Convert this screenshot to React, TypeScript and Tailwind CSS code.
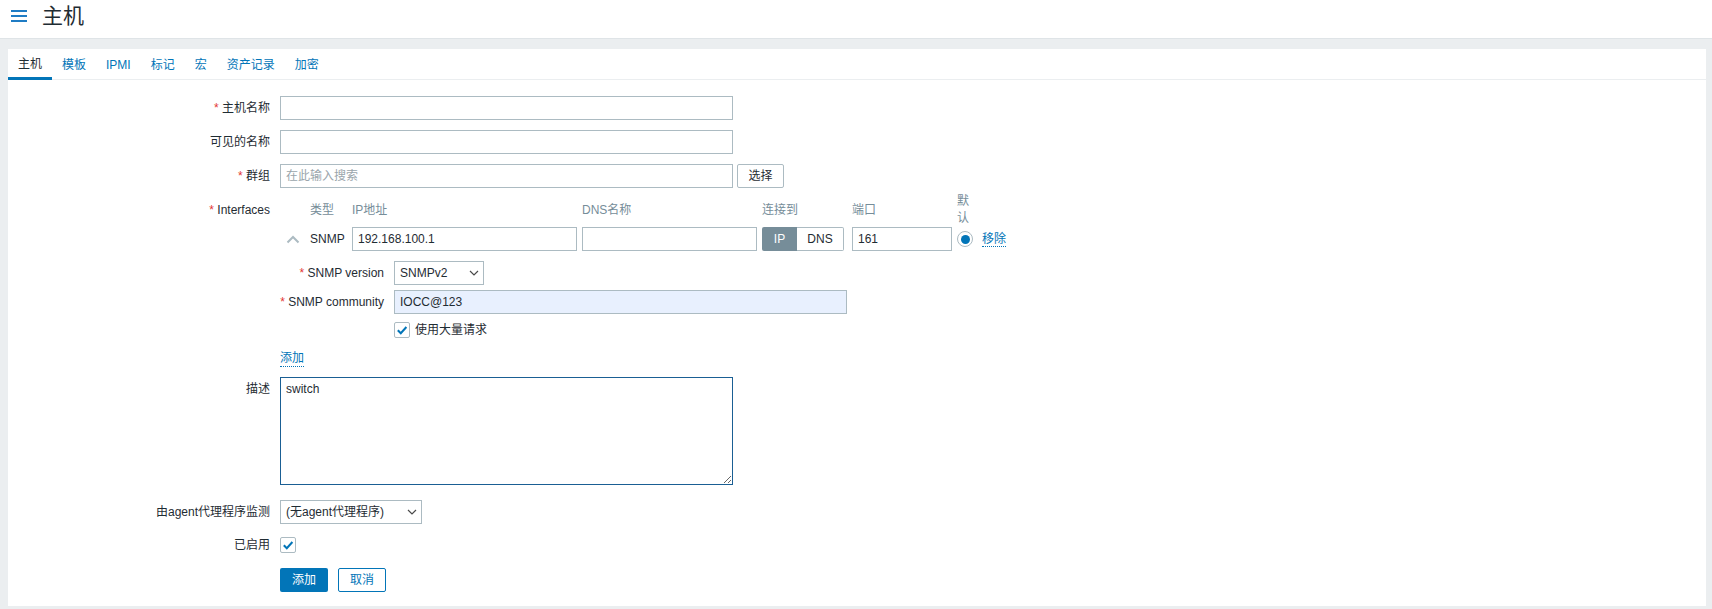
import React from "react";

const Req = () => <span className="text-[#e33734]">* </span>;

const Label = ({
  children,
  req = false,
  className = "",
}: {
  children: React.ReactNode;
  req?: boolean;
  className?: string;
}) => (
  <div className={`w-[262px] shrink-0 text-right text-[#1f2c33] ${className}`}>
    <span>
      {req && <Req />}
      {children}
    </span>
  </div>
);

const TextInput = ({
  value = "",
  placeholder,
  className = "",
}: {
  value?: string;
  placeholder?: string;
  className?: string;
}) => (
  <input
    readOnly
    defaultValue={value}
    placeholder={placeholder}
    className={`h-[24px] border border-[#acbbc2] px-[5px] text-[12px] text-[#1f2c33] outline-none placeholder:text-[#9aa5ab] ${className}`}
  />
);

const Select = ({ value, className = "" }: { value: string; className?: string }) => (
  <div
    className={`flex h-[24px] items-center justify-between border border-[#acbbc2] bg-white pl-[5px] pr-[4px] text-[#1f2c33] ${className}`}
  >
    <span>{value}</span>
    <svg width="10" height="6" viewBox="0 0 10 6">
      <path d="M1 1 L5 5 L9 1" fill="none" stroke="#4a4a4a" strokeWidth="1.2" />
    </svg>
  </div>
);

const Check = () => (
  <span className="flex h-[16px] w-[16px] items-center justify-center rounded-[2px] border border-[#acbbc2] bg-white">
    <svg width="12" height="12" viewBox="0 0 12 12">
      <path d="M1.8 6.2 L4.8 9.2 L10.4 3" fill="none" stroke="#0275b8" strokeWidth="2" />
    </svg>
  </span>
);

const DotLink = ({ children }: { children: React.ReactNode }) => (
  <span className="border-b border-dotted border-[#0275b8] leading-[15px] text-[#0275b8]">
    {children}
  </span>
);

const tabs = ["主机", "模板", "IPMI", "标记", "宏", "资产记录", "加密"];

export default function App() {
  return (
    <div className="min-h-screen bg-[#ebeef0] font-['Liberation_Sans','Noto_Sans_CJK_SC',sans-serif] text-[12px] text-[#1f2c33]">
      {/* top header */}
      <header className="h-[39px] border-b border-[#dfe4e7] bg-white pt-[5px]">
        <div className="flex h-[21px] items-center">
          <svg width="16" height="12" viewBox="0 0 16 12" className="ml-[11px]">
            <rect x="0" y="0" width="16" height="2" fill="#1f7cc4" />
            <rect x="0" y="5" width="16" height="2" fill="#1f7cc4" />
            <rect x="0" y="10" width="16" height="2" fill="#1f7cc4" />
          </svg>
          <h1 className="ml-[15px] text-[21px] leading-[21px] text-[#1f2c33]">主机</h1>
        </div>
      </header>

      <div className="ml-[8px] mr-[6px] pt-[10px]">
        <div className="bg-white pb-[14px]">
          {/* tabs */}
          <div className="flex h-[31px] border-b border-[#ebeef0]">
            {tabs.map((t, i) => (
              <div
                key={t}
                className={
                  i === 0
                    ? "-mb-px flex h-[31px] items-center border-b-[3px] border-[#0275b8] px-[10px] pt-[1px] text-[#1f2c33]"
                    : "flex h-[30px] items-center px-[10px] pt-[1px] text-[#0275b8]"
                }
              >
                {t}
              </div>
            ))}
          </div>

          {/* form */}
          <div className="flex flex-col pt-[16px]">
            <div className="flex items-center gap-[10px]">
              <Label req>主机名称</Label>
              <TextInput className="w-[453px]" />
            </div>

            <div className="mt-[10px] flex items-center gap-[10px]">
              <Label>可见的名称</Label>
              <TextInput className="w-[453px]" />
            </div>

            <div className="mt-[10px] flex items-center gap-[10px]">
              <Label req>群组</Label>
              <div className="flex gap-[4px]">
                <TextInput className="w-[453px]" placeholder="在此输入搜索" />
                <div className="flex h-[24px] w-[47px] items-center justify-center rounded-[2px] border border-[#acbbc2] bg-white text-[#1f2c33]">
                  选择
                </div>
              </div>
            </div>

            {/* interfaces */}
            <div className="mt-[5px] flex items-start gap-[10px]">
              <Label req className="flex h-[34px] items-center justify-end">
                Interfaces
              </Label>
              <div className="flex flex-col">
                <div className="grid grid-cols-[25px_37px_225px_175px_85px_100px_20px_auto] items-center gap-x-[5px]">
                  <div />
                  <div className="leading-[17px] text-[#768d99]">类型</div>
                  <div className="leading-[17px] text-[#768d99]">IP地址</div>
                  <div className="leading-[17px] text-[#768d99]">DNS名称</div>
                  <div className="leading-[17px] text-[#768d99]">连接到</div>
                  <div className="leading-[17px] text-[#768d99]">端口</div>
                  <div className="w-[16px] leading-[17px] text-[#768d99]">默认</div>
                  <div />

                  <div className="flex h-[24px] items-center justify-center">
                    <svg width="14" height="9" viewBox="0 0 14 9">
                      <path d="M1.5 7.5 L7 2 L12.5 7.5" fill="none" stroke="#acbbc2" strokeWidth="2" />
                    </svg>
                  </div>
                  <div className="text-[#1f2c33]">SNMP</div>
                  <TextInput className="w-[225px]" value="192.168.100.1" />
                  <TextInput className="w-[175px]" />
                  <div className="flex h-[24px] w-[82px]">
                    <div className="flex w-[35px] items-center justify-center rounded-l-[2px] bg-[#768d99] text-white">
                      IP
                    </div>
                    <div className="flex w-[47px] items-center justify-center rounded-r-[2px] border border-l-0 border-[#acbbc2] text-[#1f2c33]">
                      DNS
                    </div>
                  </div>
                  <TextInput className="w-[100px]" value="161" />
                  <span className="flex h-[16px] w-[16px] items-center justify-center rounded-full border border-[#acbbc2] bg-white">
                    <span className="h-[9px] w-[9px] rounded-full bg-[#0275b8]" />
                  </span>
                  <div>
                    <DotLink>移除</DotLink>
                  </div>
                </div>

                <div className="mt-[10px] flex items-center gap-[10px]">
                  <div className="w-[104px] text-right">
                    <Req />
                    SNMP version
                  </div>
                  <Select value="SNMPv2" className="w-[90px]" />
                </div>
                <div className="mt-[5px] flex items-center gap-[10px]">
                  <div className="w-[104px] text-right">
                    <Req />
                    SNMP community
                  </div>
                  <TextInput className="w-[453px] bg-[#e8f0fe]" value="IOCC@123" />
                </div>
                <div className="mt-[4px] flex h-[24px] items-center pl-[114px]">
                  <Check />
                  <span className="ml-[5px]">使用大量请求</span>
                </div>

                <div className="mt-[5px] flex h-[24px] items-center">
                  <DotLink>添加</DotLink>
                </div>
              </div>
            </div>

            <div className="mt-[6px] flex items-start gap-[10px]">
              <Label className="leading-[24px]">描述</Label>
              <textarea
                readOnly
                defaultValue="switch"
                className="h-[108px] w-[453px] border border-[#1a5f94] px-[5px] pt-[3px] text-[12px] leading-[17px] text-[#1f2c33] outline-none"
              />
            </div>

            <div className="mt-[15px] flex items-center gap-[10px]">
              <Label>由agent代理程序监测</Label>
              <Select value="(无agent代理程序)" className="w-[142px]" />
            </div>

            <div className="mt-[9px] flex h-[24px] items-center gap-[10px]">
              <Label>已启用</Label>
              <Check />
            </div>

            <div className="mt-[11px] flex items-center gap-[10px] pl-[272px]">
              <button className="h-[24px] w-[48px] rounded-[2px] bg-[#0275b8] text-white">添加</button>
              <button className="h-[24px] w-[48px] rounded-[2px] border border-[#0275b8] bg-white text-[#0275b8]">
                取消
              </button>
            </div>
          </div>
        </div>
      </div>
    </div>
  );
}
